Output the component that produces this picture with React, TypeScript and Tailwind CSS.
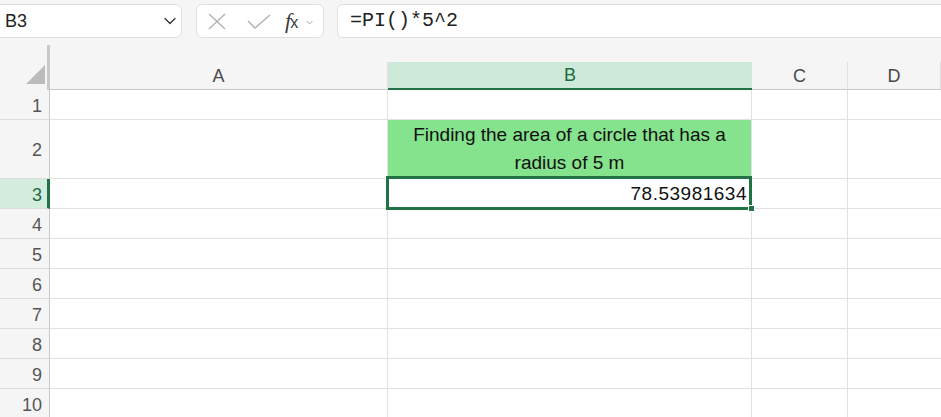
import { ChevronDown } from 'lucide-react'

const rows = [
  { n: 1, h: 'h-[30px]' },
  { n: 2, h: 'h-[59px]' },
  { n: 3, h: 'h-[30px]' },
  { n: 4, h: 'h-[30px]' },
  { n: 5, h: 'h-[30px]' },
  { n: 6, h: 'h-[30px]' },
  { n: 7, h: 'h-[30px]' },
  { n: 8, h: 'h-[30px]' },
  { n: 9, h: 'h-[30px]' },
  { n: 10, h: 'h-[30px]' },
]

const cols = [
  { id: 'A', w: 'w-[338px]' },
  { id: 'B', w: 'w-[364px]' },
  { id: 'C', w: 'w-[96px]' },
  { id: 'D', w: 'flex-1' },
]

function FormulaBar() {
  return (
    <div className="flex h-[45px] items-start pt-[4px]">
      <div className="ml-[-6px] flex h-[34px] w-[188px] items-center justify-between rounded-[6px] border border-[#e0e0e0] bg-white pl-[10px] pr-[1px]">
        <span className="text-[18px] text-[#222]">B3</span>
        <ChevronDown className="h-[20px] w-[20px] text-[#333]" strokeWidth={1.5} />
      </div>

      <div className="ml-[14px] flex h-[34px] w-[128px] items-center rounded-[6px] border border-[#e0e0e0] bg-white">
        <svg className="ml-[10px]" width="20" height="17" viewBox="0 0 20 17">
          <path d="M2 1 L18 16 M18 1 L2 16" stroke="#b4b4b4" strokeWidth="1.5" fill="none" />
        </svg>
        <svg className="ml-[20px]" width="24" height="15" viewBox="0 0 24 15">
          <path d="M1 7 L8 14 L23 1" stroke="#b4b4b4" strokeWidth="1.5" fill="none" />
        </svg>
        <span className="ml-[14px] flex items-baseline text-[#3a3a3a]">
          <span className="font-['Liberation_Serif'] text-[22px] italic leading-none">f</span>
          <span className="ml-[-1px] text-[16px] leading-none">x</span>
        </span>
        <svg className="ml-[8px] mt-[2px]" width="7" height="5" viewBox="0 0 7 5">
          <path d="M0.5 1 L3.5 4 L6.5 1" stroke="#a8a8a8" strokeWidth="1" fill="none" />
        </svg>
      </div>

      <div className="ml-[13px] mr-[-10px] flex h-[34px] flex-1 items-center rounded-[6px] border border-[#e0e0e0] bg-white pl-[12px]">
        <span className="font-['Liberation_Mono'] text-[20px] text-[#222]">=PI()*5^2</span>
      </div>
    </div>
  )
}

function ColumnHeaders() {
  return (
    <div className="flex h-[45px]">
      <div className="flex w-[50px] items-end justify-end border-r-[3px] border-[#c9c9c9] pb-[6px] pr-[2px]">
        <svg width="19" height="19" viewBox="0 0 19 19">
          <polygon points="19,0 19,19 0,19" fill="#bcbcbc" />
        </svg>
      </div>
      {cols.map((c) => (
        <div key={c.id} className={`${c.w} flex flex-col justify-end`}>
          {c.id === 'B' ? (
            <div className="flex h-[28px] items-center justify-center border-b-2 border-[#217346] bg-[#cde9d9] pt-[1px] text-[18px] text-[#1d6b3e]">
              {c.id}
            </div>
          ) : (
            <div className="flex h-[28px] items-center justify-center border-b border-r border-b-[#c9c9c9] border-r-[#e0e0e0] pt-[2px] text-[18px] text-[#4a4a4a]">
              {c.id}
            </div>
          )}
        </div>
      ))}
    </div>
  )
}

function Grid() {
  return (
    <div className="relative">
      {rows.map((r) => {
        const selected = r.n === 3
        return (
          <div key={r.n} className={`flex ${r.h}`}>
            <div
              className={
                selected
                  ? 'flex w-[50px] items-center justify-end border-b border-r-[3px] border-b-[#dcdcdc] border-r-[#217346] bg-[#d3ecdd] pr-[5px] pt-[3px] text-[18px] text-[#1d6b3e]'
                  : 'flex w-[50px] items-center justify-end border-b border-r border-b-[#dcdcdc] border-r-[#c9c9c9] pr-[7px] pt-[3px] text-[18px] text-[#555]'
              }
            >
              {r.n}
            </div>
            <div className="w-[338px] border-b border-r border-[#e1e1e1] bg-white" />
            {r.n === 2 ? (
              <div className="flex w-[364px] items-center justify-center border-r border-[#e1e1e1] bg-[#85e28d] pb-[2px] text-center text-[19px] leading-[28px] text-[#111]">
                Finding the area of a circle that has a
                <br />
                radius of 5 m
              </div>
            ) : r.n === 3 ? (
              <div className="flex w-[364px] items-center justify-end border-b border-r border-[#e1e1e1] bg-white pr-[4px] pt-[1px] text-[19px] tracking-[0.5px] text-[#111]">
                78.53981634
              </div>
            ) : (
              <div className="w-[364px] border-b border-r border-[#e1e1e1] bg-white" />
            )}
            <div className="w-[96px] border-b border-r border-[#e1e1e1] bg-white" />
            <div className="flex-1 border-b border-[#e1e1e1] bg-white" />
          </div>
        )
      })}

      <div className="absolute left-[386px] top-[86px] h-[34px] w-[366px] border-[3px] border-[#217346]" />
      <div className="absolute left-[748px] top-[115px] h-[7px] w-[7px] border border-white bg-[#217346]" />
    </div>
  )
}

export default function App() {
  return (
    <div className="h-[417px] w-[941px] overflow-hidden bg-[#f5f5f5] font-['Liberation_Sans',sans-serif]">
      <FormulaBar />
      <ColumnHeaders />
      <Grid />
    </div>
  )
}
